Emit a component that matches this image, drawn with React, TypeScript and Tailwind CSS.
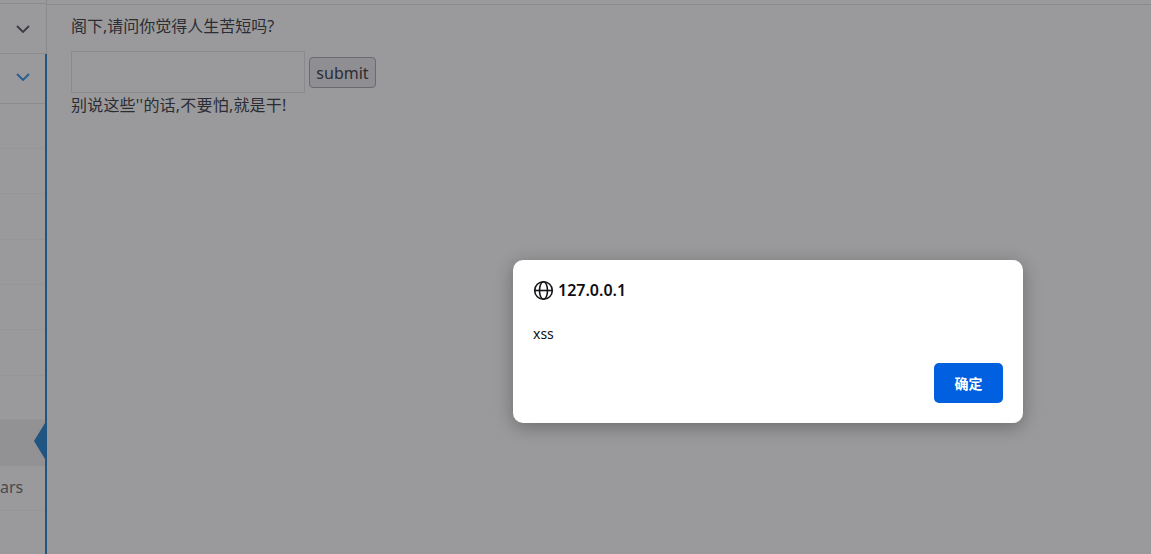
const CJK = "font-['Noto_Sans','Noto_Sans_CJK_SC',sans-serif]";

function Chevron({ className }: { className: string }) {
  return (
    <svg width="14" height="8" viewBox="0 0 14 8" fill="none" className={className}>
      <path d="M1 1l6 6 6-6" stroke="currentColor" strokeWidth="1.8" />
    </svg>
  );
}

function DottedRow({ h }: { h: string }) {
  return <div className={`${h} border-b border-dotted border-[#929293]`} />;
}

export default function App() {
  return (
    <div className={`relative h-[554px] w-[1151px] overflow-hidden bg-[#9a9a9c] ${CJK}`}>
      <div className="flex h-[554px]">
        <aside className="flex w-[47px] shrink-0 flex-col">
          <div className="h-[54px] border-r border-b border-[#8b8b8d]">
            <div className="h-[4px] border-b border-[#8b8b8d]" />
            <div className="flex h-[49px] items-center justify-center pr-[1px]">
              <Chevron className="text-[#3a3c42]" />
            </div>
          </div>
          <div className="flex-1 border-r-2 border-[#1f5580]">
            <div className="flex h-[50px] items-center justify-center border-b border-[#8c8c8e] pb-[3px]">
              <Chevron className="text-[#235f90]" />
            </div>
            <DottedRow h="h-[45px]" />
            <DottedRow h="h-[45px]" />
            <DottedRow h="h-[46px]" />
            <DottedRow h="h-[45px]" />
            <DottedRow h="h-[45px]" />
            <DottedRow h="h-[46px]" />
            <DottedRow h="h-[44px]" />
            <div className="relative h-[46px] border-b border-dotted border-[#929293] bg-[#929194]">
              <div className="absolute right-0 top-[3px] h-[36px] w-[11px] bg-[#1f5580] [clip-path:polygon(100%_0,100%_100%,0_50%)]" />
            </div>
            <div className="flex h-[45px] items-center border-b border-dotted border-[#929293] pb-[3px] text-[16px] text-[#48494e]">
              ars
            </div>
          </div>
        </aside>
        <main className="flex-1">
          <div className="h-[5px] border-b border-[#8b8b8d]" />
          <div className="pl-[24px] pt-[9px] text-[16px] leading-[24px] text-[#2c2d33]">
            <p className="h-[37px]">阁下,请问你觉得人生苦短吗?</p>
            <div className="flex items-end gap-[4px]">
              <div className="h-[42px] w-[234px] border border-[#8a8a8c]" />
              <div className="mb-[5px] flex h-[31px] w-[67px] items-center justify-center rounded-[4px] border border-[#6a6b70] bg-[#8e8e93] text-[16px]">
                submit
              </div>
            </div>
            <p className="tracking-[0.2px]">别说这些''的话,不要怕,就是干!</p>
          </div>
        </main>
      </div>

      <div className="absolute left-[513px] top-[260px] h-[163px] w-[510px] rounded-[10px] bg-white px-[20px] pt-[18px] shadow-[0_4px_18px_rgba(0,0,0,0.3)]">
        <div className="flex h-[24px] items-center gap-[4px] text-[16px] font-semibold text-[#0f0f12]">
          <svg width="21" height="21" viewBox="0 0 21 21" fill="none" stroke="#16161a" strokeWidth="1.6">
            <circle cx="10.5" cy="10.5" r="8.8" />
            <ellipse cx="10.5" cy="10.5" rx="4" ry="8.8" />
            <path d="M1.7 10.5h17.6" />
          </svg>
          127.0.0.1
        </div>
        <div className="mt-[20px] h-[24px] text-[14px] leading-[24px] text-[#111114]">xss</div>
        <div className="mt-[17px] flex justify-end">
          <div className="flex h-[40px] w-[69px] items-center justify-center rounded-[5px] bg-[#0060e0] pt-[1px] text-[14px] font-bold text-white">
            确定
          </div>
        </div>
      </div>
    </div>
  );
}
